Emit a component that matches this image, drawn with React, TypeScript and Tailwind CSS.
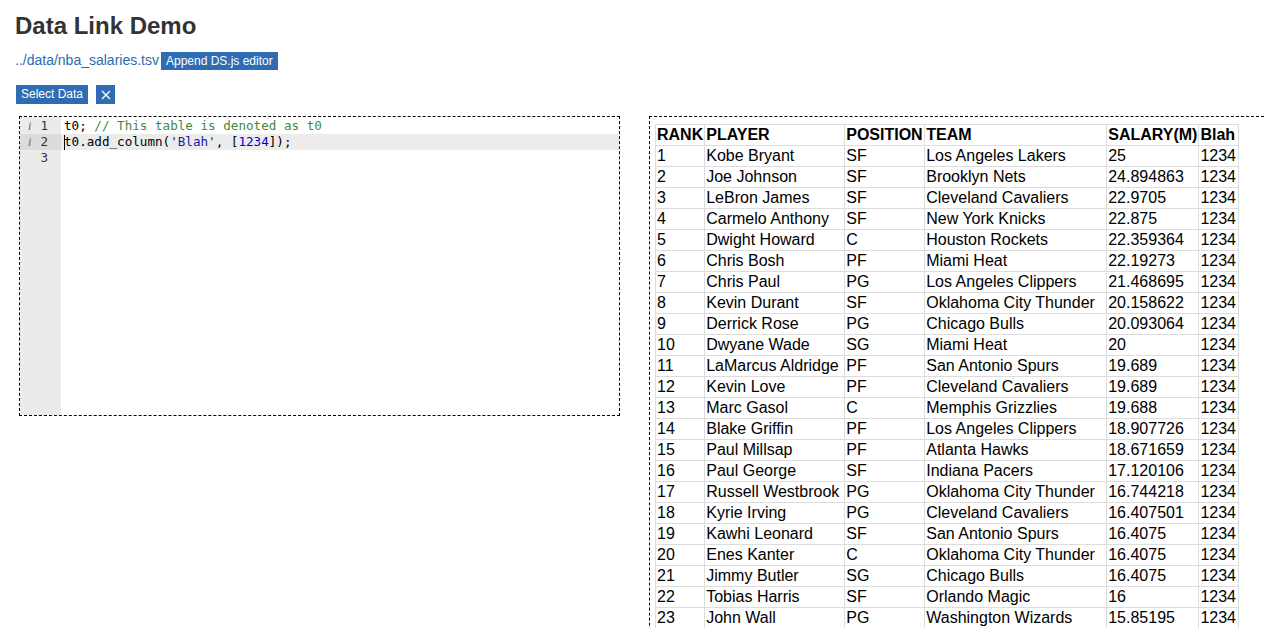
const rows: [number, string, string, string, string][] = [
  [1, "Kobe Bryant", "SF", "Los Angeles Lakers", "25"],
  [2, "Joe Johnson", "SF", "Brooklyn Nets", "24.894863"],
  [3, "LeBron James", "SF", "Cleveland Cavaliers", "22.9705"],
  [4, "Carmelo Anthony", "SF", "New York Knicks", "22.875"],
  [5, "Dwight Howard", "C", "Houston Rockets", "22.359364"],
  [6, "Chris Bosh", "PF", "Miami Heat", "22.19273"],
  [7, "Chris Paul", "PG", "Los Angeles Clippers", "21.468695"],
  [8, "Kevin Durant", "SF", "Oklahoma City Thunder", "20.158622"],
  [9, "Derrick Rose", "PG", "Chicago Bulls", "20.093064"],
  [10, "Dwyane Wade", "SG", "Miami Heat", "20"],
  [11, "LaMarcus Aldridge", "PF", "San Antonio Spurs", "19.689"],
  [12, "Kevin Love", "PF", "Cleveland Cavaliers", "19.689"],
  [13, "Marc Gasol", "C", "Memphis Grizzlies", "19.688"],
  [14, "Blake Griffin", "PF", "Los Angeles Clippers", "18.907726"],
  [15, "Paul Millsap", "PF", "Atlanta Hawks", "18.671659"],
  [16, "Paul George", "SF", "Indiana Pacers", "17.120106"],
  [17, "Russell Westbrook", "PG", "Oklahoma City Thunder", "16.744218"],
  [18, "Kyrie Irving", "PG", "Cleveland Cavaliers", "16.407501"],
  [19, "Kawhi Leonard", "SF", "San Antonio Spurs", "16.4075"],
  [20, "Enes Kanter", "C", "Oklahoma City Thunder", "16.4075"],
  [21, "Jimmy Butler", "SG", "Chicago Bulls", "16.4075"],
  [22, "Tobias Harris", "SF", "Orlando Magic", "16"],
  [23, "John Wall", "PG", "Washington Wizards", "15.85195"],
];

const headers = ["RANK", "PLAYER", "POSITION", "TEAM", "SALARY(M)", "Blah"];
const colWidths = ["w-[48px]", "w-[140px]", "w-[80px]", "w-[182px]", "w-[92px]", "w-[40px]"];

const Editor = () => {
  const lines = [
    {
      n: 1,
      info: true,
      code: (
        <>
          t0; <span className="text-[#3f8a3f]">// This table is denoted as t0</span>
        </>
      ),
    },
    {
      n: 2,
      info: true,
      active: true,
      code: (
        <>
          <span className="relative">
            <span className="absolute left-0 top-[1px] h-[15px] w-px bg-black" />
            t0
          </span>
          .add_column(<span className="text-[#1a1aa6]">'Blah'</span>, [
          <span className="text-[#0000cd]">1234</span>]);
        </>
      ),
    },
    { n: 3, info: false, code: <>&nbsp;</> },
  ];

  return (
    <div className="flex h-[300px] w-[601px] shrink-0 border border-dashed border-black font-['DejaVu_Sans_Mono',monospace] text-[12.6px] text-black">
      <div className="h-full w-[41px] bg-[#ebebeb] pt-[1px] text-[#333]">
        {lines.map((l) => (
          <div
            key={l.n}
            className={`flex h-4 items-center justify-end pr-[13px] leading-4 ${l.active ? "bg-[#dcdcdc]" : ""}`}
          >
            {l.info && (
              <span className="mr-[9px] font-['Liberation_Serif',serif] text-[12px] italic text-[#666]">
                i
              </span>
            )}
            {l.n}
          </div>
        ))}
      </div>
      <div className="flex-1 pt-[1px]">
        {lines.map((l) => (
          <div
            key={l.n}
            className={`h-4 whitespace-pre pl-[3px] leading-4 ${l.active ? "bg-[#ececec]" : ""}`}
          >
            {l.code}
          </div>
        ))}
      </div>
    </div>
  );
};

export default function App() {
  return (
    <div className="h-[628px] w-[1264px] overflow-hidden bg-white font-['Liberation_Sans',Arial,sans-serif]">
      <div className="pl-[15px] pt-[11px]">
        <h1 className="text-[24px] font-bold leading-[30px] text-[#333]">Data Link Demo</h1>
        <div className="mt-[9px] flex items-center text-[14px]">
          <a className="text-[#2b6cb0]">../data/nba_salaries.tsv</a>
          <button className="ml-[2px] h-[18px] bg-[#2e6db4] px-[5px] text-[12px] leading-[18px] text-white">
            Append DS.js editor
          </button>
        </div>
        <div className="mt-[14px] flex items-center gap-[8px] pl-[1px]">
          <button className="h-[19px] w-[72px] bg-[#2e6db4] text-[12px] leading-[19px] text-white">
            Select Data
          </button>
          <button className="flex h-[19px] w-[19px] items-center justify-center bg-[#2e6db4] text-white">
            <svg width="10" height="10" viewBox="0 0 10 10">
              <path d="M1 1L9 9M9 1L1 9" stroke="white" strokeWidth="1.3" />
            </svg>
          </button>
        </div>
      </div>
      <div className="mt-[12px] flex gap-[29px] pl-[19px]">
        <Editor />
        <div className="h-[600px] w-[620px] shrink-0 border border-dashed border-black pl-[5px] pt-[7px]">
          <table className="table-fixed border-collapse text-[16px] text-black">
            <colgroup>
              {colWidths.map((w, i) => (
                <col key={i} className={w} />
              ))}
            </colgroup>
            <thead>
              <tr>
                {headers.map((h) => (
                  <th
                    key={h}
                    className="overflow-hidden whitespace-nowrap border border-[#dddddd] px-[1px] py-[1px] text-left font-bold leading-[18px]"
                  >
                    {h}
                  </th>
                ))}
              </tr>
            </thead>
            <tbody>
              {rows.map((r) => (
                <tr key={r[0]}>
                  {[...r, "1234"].map((c, i) => (
                    <td
                      key={i}
                      className="overflow-hidden whitespace-nowrap border border-[#dddddd] px-[1px] py-[1px] leading-[18px]"
                    >
                      {c}
                    </td>
                  ))}
                </tr>
              ))}
            </tbody>
          </table>
        </div>
      </div>
    </div>
  );
}
